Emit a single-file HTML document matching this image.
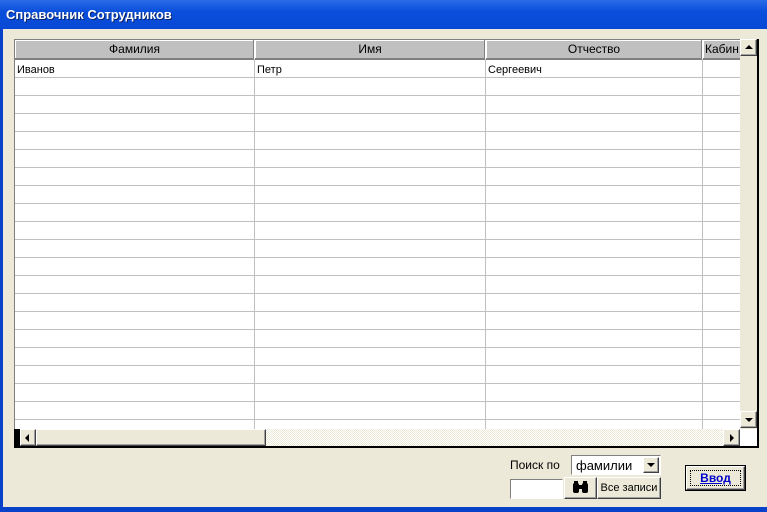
<!DOCTYPE html>
<html><head><meta charset="utf-8"><style>
*{margin:0;padding:0;box-sizing:border-box}
body{width:767px;height:512px;overflow:hidden;background:#ECE9D8;font-family:"Liberation Sans",sans-serif;font-size:11px;position:relative}
.a{position:absolute}
.title{left:0;top:0;width:767px;height:29px;background:linear-gradient(#2a6be8,#0a4fdc 40%,#0848d4);color:#fff;font-weight:bold;font-size:13px;padding:7px 0 0 6px;text-shadow:1px 1px #0a246a}
.bl{left:0;top:29px;width:3px;height:483px;background:#0842c8}
.bb{left:0;top:507px;width:767px;height:5px;background:#0842c8}
.grid{left:14px;top:39px;width:726px;height:390px;background:#fff;border-top:1px solid #808080;border-left:1px solid #808080;overflow:hidden}
.hd{top:0;height:20px;background:#c0c0c0;border-right:1px solid #fff;border-bottom:1px solid #808080;text-align:center;font-size:12px;line-height:19px;box-shadow:inset -1px -1px #808080,inset 1px 1px #fff}
.vl{top:20px;width:1px;height:380px;background:#c0c0c0}
.hl{left:0;width:726px;height:1px;background:#c0c0c0}
.cell{top:24px;font-size:11px}
.btn{background:#ECE9D8;border:1px solid;border-color:#fff #404040 #404040 #fff;box-shadow:inset -1px -1px #a0a0a0}
.tri{width:0;height:0;position:absolute}
</style></head><body>
<div class="a title">Справочник Сотрудников</div>
<div class="a bl"></div><div class="a bb"></div>
<div class="a grid">
<div class="a hd" style="left:0;width:240px">Фамилия</div>
<div class="a hd" style="left:240px;width:231px">Имя</div>
<div class="a hd" style="left:471px;width:217px">Отчество</div>
<div class="a hd" style="left:688px;width:40px;text-align:left;padding-left:2px">Кабин</div>
<div class="a vl" style="left:239px"></div>
<div class="a vl" style="left:470px"></div>
<div class="a vl" style="left:687px"></div>
<div class="a cell" style="left:2px">Иванов</div>
<div class="a cell" style="left:242px">Петр</div>
<div class="a cell" style="left:473px">Сергеевич</div>
<div class="a hl" style="top:37px"></div><div class="a hl" style="top:55px"></div><div class="a hl" style="top:73px"></div><div class="a hl" style="top:91px"></div><div class="a hl" style="top:109px"></div><div class="a hl" style="top:127px"></div><div class="a hl" style="top:145px"></div><div class="a hl" style="top:163px"></div><div class="a hl" style="top:181px"></div><div class="a hl" style="top:199px"></div><div class="a hl" style="top:217px"></div><div class="a hl" style="top:235px"></div><div class="a hl" style="top:253px"></div><div class="a hl" style="top:271px"></div><div class="a hl" style="top:289px"></div><div class="a hl" style="top:307px"></div><div class="a hl" style="top:325px"></div><div class="a hl" style="top:343px"></div><div class="a hl" style="top:361px"></div><div class="a hl" style="top:379px"></div>
</div>
<!-- vertical scrollbar -->
<div class="a" style="left:740px;top:39px;width:17px;height:390px;background:#ECE9D8"></div>
<div class="a btn" style="left:740px;top:39px;width:17px;height:17px"><div class="tri" style="left:4px;top:5px;border-left:4px solid transparent;border-right:4px solid transparent;border-bottom:4px solid #000"></div></div>
<div class="a btn" style="left:740px;top:411px;width:17px;height:17px"><div class="tri" style="left:4px;top:6px;border-left:4px solid transparent;border-right:4px solid transparent;border-top:4px solid #000"></div></div>
<div class="a" style="left:757px;top:39px;width:2px;height:409px;background:#000"></div>
<!-- horizontal scrollbar -->
<div class="a" style="left:14px;top:429px;width:726px;height:17px;background:repeating-conic-gradient(#ECE9D8 0 25%,#fff 0 50%) 0 0/2px 2px"></div>
<div class="a" style="left:14px;top:429px;width:6px;height:17px;background:#000"></div>
<div class="a btn" style="left:20px;top:429px;width:16px;height:17px"><div class="tri" style="left:4px;top:4px;border-top:4px solid transparent;border-bottom:4px solid transparent;border-right:4px solid #000"></div></div>
<div class="a btn" style="left:36px;top:429px;width:230px;height:17px"></div>
<div class="a btn" style="left:723px;top:429px;width:17px;height:17px"><div class="tri" style="left:6px;top:4px;border-top:4px solid transparent;border-bottom:4px solid transparent;border-left:4px solid #000"></div></div>
<div class="a" style="left:740px;top:429px;width:17px;height:17px;background:#fff"></div>
<div class="a" style="left:14px;top:446px;width:745px;height:2px;background:#000"></div>
<!-- bottom controls -->
<div class="a" style="left:510px;top:458px;font-size:12px">Поиск по</div>
<div class="a" style="left:571px;top:455px;width:90px;height:20px;background:#fff;border:1px solid;border-color:#808080 #fff #fff #808080;font-size:13px;padding:2px 0 0 4px">фамилии</div>
<div class="a btn" style="left:643px;top:457px;width:16px;height:16px"><div class="tri" style="left:3px;top:5px;border-left:4px solid transparent;border-right:4px solid transparent;border-top:4px solid #000"></div></div>
<div class="a" style="left:510px;top:479px;width:53px;height:20px;background:#fff;border:1px solid;border-color:#808080 #fff #fff #808080"></div>
<div class="a btn" style="left:564px;top:477px;width:33px;height:22px"><svg width="31" height="20" style="position:absolute;left:0;top:0"><g fill="#000"><rect x="8" y="5" width="6" height="10" rx="2"/><rect x="17" y="5" width="6" height="10" rx="2"/><rect x="13" y="7" width="5" height="4"/><rect x="9" y="3" width="4" height="3"/><rect x="18" y="3" width="4" height="3"/></g></svg></div>
<div class="a btn" style="left:597px;top:477px;width:64px;height:22px;font-size:11px;line-height:20px;text-align:center">Все записи</div>
<div class="a" style="left:685px;top:465px;width:61px;height:26px;border:1px solid #000;background:#ECE9D8"></div>
<div class="a btn" style="left:686px;top:466px;width:59px;height:24px"><div class="a" style="left:3px;top:3px;width:51px;height:16px;border:1px dotted #000;text-align:center;color:#0000cc;font-weight:bold;font-size:12px;text-decoration:underline;line-height:14px">Ввод</div></div>
</body></html>
